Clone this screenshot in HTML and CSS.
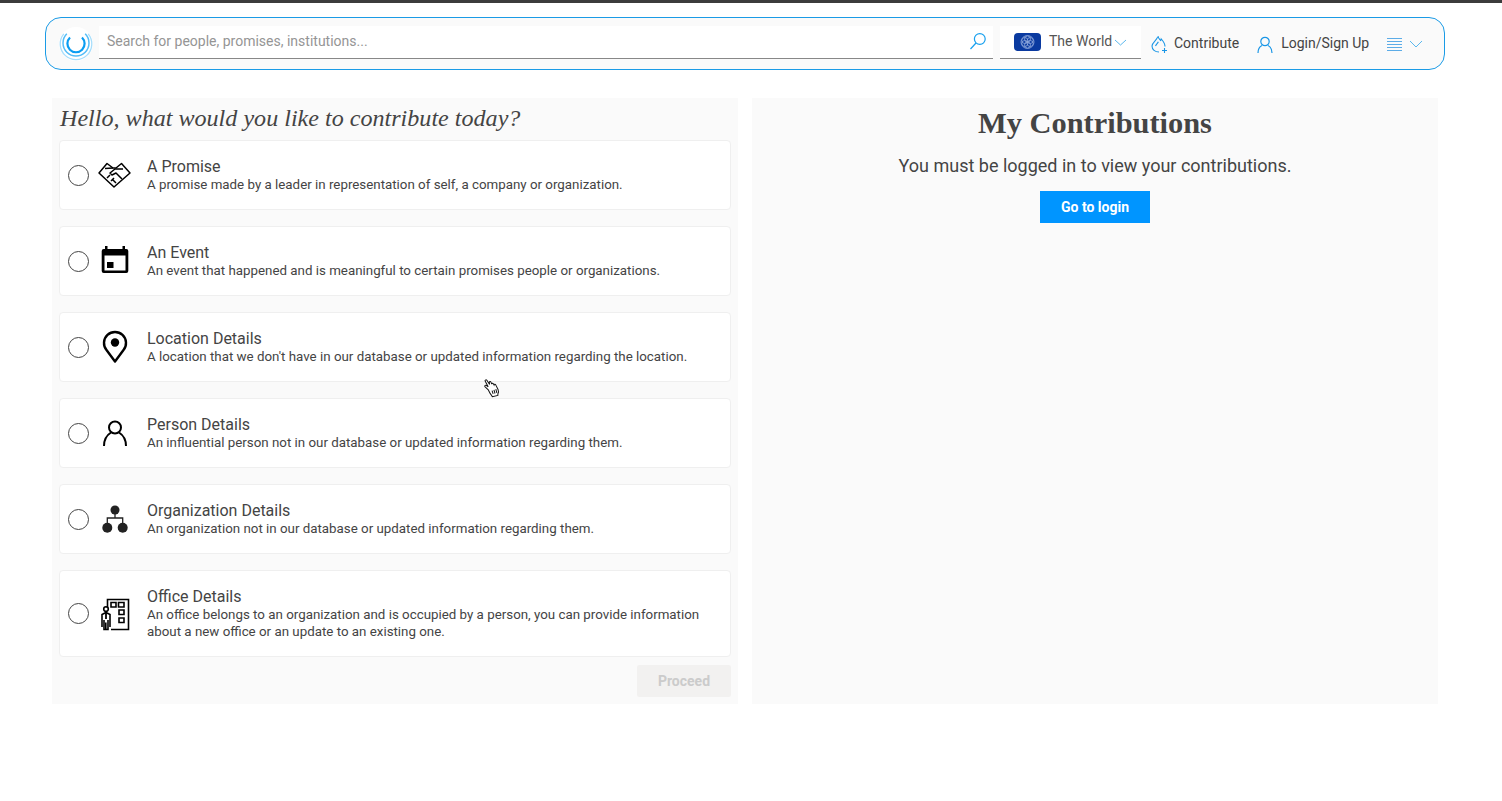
FILE: index.html
```html
<!DOCTYPE html>
<html lang="en">
<head>
<meta charset="utf-8">
<title>Contribute</title>
<link rel="stylesheet" href="styles.css">
</head>
<body>
<header class="topbar">
  <svg class="logo" width="34" height="34" viewBox="0 0 34 34" fill="none">
    <circle cx="17" cy="17" r="17" fill="#fff"/>
    <path d="M11 10.500a8.600 8.600 0 1 0 12 0" stroke="#0a9df2" stroke-width="2.200"/>
    <path d="M7.800 6.800a13 13 0 1 0 18.400 0" stroke="#55bdf7" stroke-width="1.500"/>
    <path d="M4.800 6.800a15.800 15.800 0 1 0 24.400 0" stroke="#a8defb" stroke-width="1.300"/>
  </svg>
  <div class="search">
    <span class="search-text">Search for people, promises, institutions...</span>
    <svg width="18" height="18" viewBox="0 0 18 18" fill="none" stroke="#18a0ee" stroke-width="1.200"><circle cx="10.800" cy="7" r="5.400"/><path d="M7 11 1.500 17"/></svg>
  </div>
  <div class="world">
    <svg class="flag" width="27" height="18" viewBox="0 0 27 18"><rect width="27" height="18" rx="4" fill="#0a3aa0"/><g fill="none" stroke="#8fa8dc" stroke-width=".8"><circle cx="13.500" cy="9" r="6.500"/><circle cx="13.500" cy="6" r="3"/><circle cx="13.500" cy="12" r="3"/><circle cx="10.800" cy="7.500" r="3"/><circle cx="16.200" cy="7.500" r="3"/><circle cx="10.800" cy="10.500" r="3"/><circle cx="16.200" cy="10.500" r="3"/></g></svg>
    <span class="world-name">The World</span>
    <svg class="chev" width="13" height="7" viewBox="0 0 13 7" fill="none" stroke="#5bb8ee" stroke-width="1"><path d="m1 1 5.500 5L12 1"/></svg>
  </div>
  <a class="nav nav-contribute">
    <svg class="nav-icon" width="16" height="18" viewBox="0 0 16 18" fill="none" stroke="#1a96e6" stroke-width="1.100"><path d="M8 17c-4 0-7-2.500-7-6C1 7.500 6 5.500 7 1c.5 2.500 1.500 3 2.500 4.500.5-.5.8-1 .8-1.500C12.500 6.500 14 9 14 11.500"/><path d="M4.500 11C5.500 9 6.800 8.200 7.300 6.800"/><path d="M11 15.500h5M13.500 13v5"/></svg>
    <span>Contribute</span>
  </a>
  <a class="nav nav-login">
    <svg class="nav-icon" width="16" height="17" viewBox="0 0 16 17" fill="none" stroke="#1a96e6" stroke-width="1.200"><circle cx="8" cy="5.500" r="4.200"/><path d="M1 17c0-4 2-6.500 4-7.500M15 17c0-4-2-6.500-4-7.500"/></svg>
    <span>Login/Sign Up</span>
  </a>
  <a class="nav nav-menu">
    <svg class="nav-icon" width="15" height="13" viewBox="0 0 15 13" stroke="#4aa3e4" stroke-width=".9"><path d="M0 .5h15M0 3.500h15M0 6.500h15M0 9.500h15M0 12.500h15"/></svg>
    <svg class="nav-icon" width="14" height="8" viewBox="0 0 14 8" fill="none" stroke="#5bb8ee" stroke-width="1"><path d="m1 1 6 6 6-6"/></svg>
  </a>
</header>

<main class="layout">
  <section class="panel panel-left">
    <h2 class="greeting">Hello, what would you like to contribute today?</h2>
    <ul class="options">
      <li class="card">
        <span class="radio"></span>
        <svg class="icon" width="36" height="36" viewBox="1 0 36 36" fill="none" stroke="#000" stroke-width="1.500" stroke-linejoin="round"><path d="M3 16 11 6.500l6 4.500h3l5.500-4.500L34 16 18 30z"/><path d="M9 11.500 17 11M27 12l-8 0-5 4 2 2 4-2 6 6"/><path d="M11 21l3-3M15 24l3-3M20 26l-3-3"/></svg>
        <div class="card-text"><h3>A Promise</h3><p>A promise made by a leader in representation of self, a company or organization.</p></div>
      </li>
      <li class="card">
        <span class="radio"></span>
        <svg class="icon" width="36" height="36" viewBox="0 0 36 36"><path fill-rule="evenodd" d="M8 3h2.500v3h15V3H28v3h1.300a2 2 0 0 1 2 2v20a2 2 0 0 1-2 2H6.700a2 2 0 0 1-2-2V8a2 2 0 0 1 2-2H8zM7.500 12.500v15h21v-15zM10 19h6.500v6H10z"/></svg>
        <div class="card-text"><h3>An Event</h3><p>An event that happened and is meaningful to certain promises people or organizations.</p></div>
      </li>
      <li class="card">
        <span class="radio"></span>
        <svg class="icon" width="36" height="36" viewBox="0 0 36 36" fill="none" stroke="#000" stroke-width="2.400"><path d="M18 32.500 9.500 21A11 11 0 1 1 26.500 21z" stroke-linejoin="round"/><circle cx="18" cy="13.500" r="4.200" fill="#000" stroke="none"/></svg>
        <div class="card-text"><h3>Location Details</h3><p>A location that we don't have in our database or updated information regarding the location.</p></div>
      </li>
      <li class="card">
        <span class="radio"></span>
        <svg class="icon" width="36" height="36" viewBox="0 0 36 36" fill="none" stroke="#000" stroke-width="2"><circle cx="18" cy="12.500" r="6"/><path d="M7 31c0-7 3-11 7-13.500M29 31c0-7-3-11-7-13.500"/></svg>
        <div class="card-text"><h3>Person Details</h3><p>An influential person not in our database or updated information regarding them.</p></div>
      </li>
      <li class="card">
        <span class="radio"></span>
        <svg class="icon" width="36" height="36" viewBox="0 0 36 36" fill="#222" stroke="#222"><circle cx="18" cy="9" r="4.500" stroke="none"/><circle cx="10.300" cy="26.700" r="5" stroke="none"/><circle cx="25.700" cy="26.700" r="5" stroke="none"/><path d="M18 12v5M10.300 23v-6h15.400v6" fill="none" stroke-width="1.300"/></svg>
        <div class="card-text"><h3>Organization Details</h3><p>An organization not in our database or updated information regarding them.</p></div>
      </li>
      <li class="card">
        <span class="radio"></span>
        <svg class="icon" width="36" height="36" viewBox="0 0 36 36" fill="none" stroke="#000" stroke-width="1.600"><path d="M10.500 12V3.500h21v30H14"/><path d="M14 6.500h5v4.500h-5zM21.500 6.500h5.500v4.500h-5.500zM22 14h5v4.500h-5zM22 22h5v4.500h-5z"/><circle cx="9" cy="13" r="2.300"/><path d="M5 31V18.500l4-2 4 2V31M5 23v3M13 23v3M7 24v9.500h1.800v-7M11 24v9.500H9.200"/><path d="M9 17v6" stroke-width="1.800"/></svg>
        <div class="card-text"><h3>Office Details</h3><p>An office belongs to an organization and is occupied by a person, you can provide information about a new office or an update to an existing one.</p></div>
      </li>
    </ul>
    <div class="actions"><button class="btn-proceed" type="button">Proceed</button></div>
  </section>

  <section class="panel panel-right">
    <h1>My Contributions</h1>
    <p class="notice">You must be logged in to view your contributions.</p>
    <button class="btn-login" type="button">Go to login</button>
  </section>
</main>

<svg class="cursor" width="16" height="20" viewBox="0 0 16 20" fill="#fff" stroke="#111" stroke-width="1"><path d="M4 11 1.500 7.500c-.8-1.200.6-2 1.500-1.200L4.500 8 2.800 2c-.4-1.400 1.300-1.900 1.800-.6L6.400 6l.1-2c.2-1 1.500-1 1.700 0l.4 2.200c.2-.9 1.400-.9 1.600 0l.4 1.300c.3-.8 1.500-.7 1.700.2l1.300 5c.4 2-.3 3.300-1.100 4.300l-.3 1.500H6.500l-.5-1.500c-1-1-1.400-3.500-2-6z"/><path d="M7.500 12.500l.4 3.500M9.500 12.300l.3 3.700M11.500 12l.2 3.700" fill="none"/></svg>
</body>
</html>
```
FILE: styles.css
```css
* { box-sizing: border-box; }
html, body { margin: 0; padding: 0; }
body {
  background: #fff;
  border-top: 3px solid #3c3c3c;
  font-family: Roboto, "Liberation Sans", sans-serif;
  color: #444;
  min-height: 801px;
  position: relative;
}
.topbar {
  width: 1400px;
  height: 53px;
  margin: 14px 0 0 45px;
  padding: 0 0 0 13px;
  display: flex;
  align-items: center;
  background: #fafafa;
  border: 1px solid #1a9be6;
  border-radius: 16px;
}
.logo { flex: none; margin-top: 1px; }
.search {
  width: 894px;
  height: 33px;
  margin: -3px 0 0 6px;
  padding: 0 6px 2px 8px;
  display: flex;
  align-items: center;
  justify-content: space-between;
  background: #fff;
  border-bottom: 1px solid #888;
  font-size: 14px;
  color: #959595;
}
.world {
  width: 141px;
  height: 33px;
  margin: -3px 0 0 7px;
  padding: 0 0 0 14px;
  display: flex;
  align-items: center;
  background: #fff;
  border-bottom: 1px solid #888;
  font-size: 14px;
  color: #555;
}
.flag { flex: none; }
.world-name { margin: -2px 0 0 8px; }
.chev { margin: 2px 0 0 2px; }
.nav {
  display: flex;
  align-items: center;
  font-size: 14px;
  color: #444;
  margin-top: -2px;
}
.nav-icon { margin-top: 3px; }
.nav-contribute { margin-left: 10px; gap: 7px; }
.nav-login { margin-left: 18px; gap: 8px; }
.nav-menu { margin-left: 18px; gap: 7px; }
.layout {
  display: flex;
  gap: 14px;
  margin: 28px 0 0 52px;
}
.panel {
  width: 686px;
  height: 606px;
  background: #fafafa;
}
.panel-left { padding: 0 7px; }
.greeting {
  margin: 0;
  height: 42px;
  padding: 5px 0 0 1px;
  font-family: "Liberation Serif", serif;
  font-style: italic;
  font-weight: 400;
  font-size: 24.100px;
  line-height: 30px;
  color: #444;
}
.options {
  list-style: none;
  margin: 0;
  padding: 0;
  display: flex;
  flex-direction: column;
  gap: 16px;
}
.card {
  min-height: 70px;
  display: flex;
  align-items: center;
  padding: 0 8px;
  background: #fff;
  border: 1px solid #efefef;
  border-radius: 4px;
}
.card:last-child { height: 87px; }
.radio {
  flex: none;
  width: 21px;
  height: 21px;
  border: 1.500px solid #444;
  border-radius: 50%;
}
.icon { flex: none; margin-left: 8px; }
.card-text { margin-left: 14px; padding-right: 20px; }
.card h3 {
  margin: 0;
  font-size: 16px;
  font-weight: 400;
  line-height: 18px;
  color: #444;
}
.card p {
  margin: 0;
  font-size: 13.330px;
  line-height: 17px;
  color: #444;
}
.actions {
  display: flex;
  justify-content: flex-end;
  margin-top: 8px;
}
.btn-proceed {
  width: 94px;
  height: 32px;
  border: 0;
  border-radius: 2px;
  background: #f2f1f0;
  color: #cbcbcb;
  font: 700 14px Roboto, sans-serif;
}
.panel-right {
  display: flex;
  flex-direction: column;
  align-items: center;
}
.panel-right h1 {
  margin: 7px 0 0;
  font-family: "Liberation Serif", serif;
  font-size: 30.400px;
  font-weight: 700;
  line-height: 36px;
  color: #444;
}
.notice {
  margin: 14px 0 0;
  font-size: 18px;
  line-height: 22px;
  color: #444;
}
.btn-login {
  width: 110px;
  height: 32px;
  margin-top: 14px;
  border: 0;
  background: #0095ff;
  color: #fff;
  font: 700 14px Roboto, sans-serif;
}
.cursor { position: absolute; left: 484px; top: 375px; transform: rotate(-12deg); }
```
